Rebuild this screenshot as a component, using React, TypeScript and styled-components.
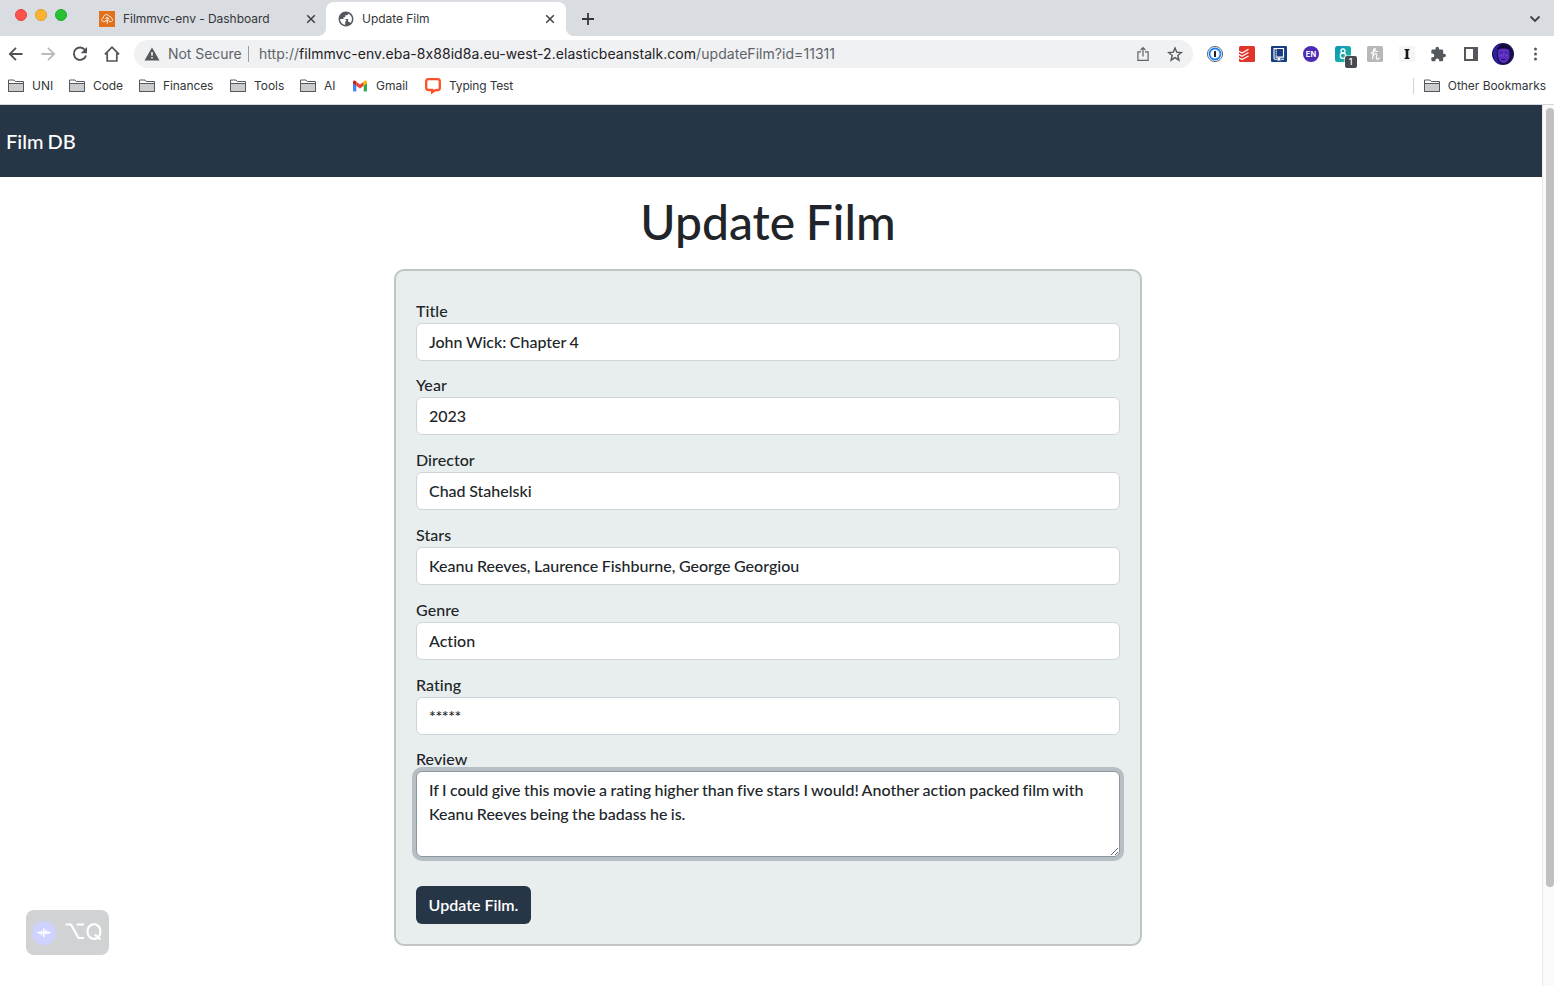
import React from "react";
import styled, { createGlobalStyle } from "styled-components";

const GlobalStyle = createGlobalStyle`
  *, *::before, *::after { box-sizing: border-box; }
  html, body { margin: 0; padding: 0; background: #fff; overflow: hidden; }
  input, textarea, button { font: inherit; color: inherit; }
`;

const Window = styled.div`
  display: flex;
  flex-direction: column;
  width: 1554px;
  height: 986px;
  overflow: hidden;
  font-family: Inter, "Liberation Sans", sans-serif;
  color: #333639;
`;

/* ---------- tab strip ---------- */

const TabStrip = styled.header`
  display: flex;
  height: 36px;
  padding-left: 15px;
  background: #d9dce1;
`;

const TrafficLights = styled.div`
  display: flex;
  gap: 8px;
  width: 72px;
  padding-top: 9px;
`;

const Light = styled.span<{ $fill: string; $edge: string }>`
  width: 12px;
  height: 12px;
  border-radius: 50%;
  background: ${(p) => p.$fill};
  border: 1px solid ${(p) => p.$edge};
`;

const Tab = styled.div<{ $active?: boolean }>`
  position: relative;
  display: flex;
  align-items: center;
  width: ${(p) => (p.$active ? 240 : 239)}px;
  height: 34px;
  margin-top: 2px;
  padding: 0 ${(p) => (p.$active ? 11 : 10)}px 0 12px;
  border-radius: 8px 8px 0 0;
  background: ${(p) => (p.$active ? "#fff" : "transparent")};
  font-size: 12px;

  &::before,
  &::after {
    content: ${(p) => (p.$active ? '""' : "none")};
    position: absolute;
    bottom: 0;
    width: 8px;
    height: 8px;
  }
  &::before {
    left: -8px;
    background: radial-gradient(circle at 0 0, #d9dce1 7.5px, #fff 8.5px);
  }
  &::after {
    right: -8px;
    background: radial-gradient(circle at 100% 0, #d9dce1 7.5px, #fff 8.5px);
  }
`;

const TabTitle = styled.span`
  flex: 1;
  margin-left: 8px;
  padding-bottom: 2px;
  white-space: nowrap;
  letter-spacing: -0.04px;
`;

const NewTab = styled.div`
  display: flex;
  align-items: center;
  margin-left: 15px;
  padding-top: 2px;
`;

const TabSearch = styled.div`
  display: flex;
  align-items: center;
  margin-left: auto;
  padding: 2px 13px 0 0;
`;

/* ---------- toolbar ---------- */

const Toolbar = styled.div`
  display: flex;
  align-items: center;
  height: 36px;
  background: #fff;
`;

const Slot = styled.span`
  display: flex;
  flex: 0 0 32px;
  align-items: center;
  justify-content: center;
  height: 28px;
`;

const AddressBar = styled.div`
  display: flex;
  flex: 0 0 1059px;
  align-items: center;
  height: 28px;
  margin: 0 6px;
  padding: 0 2px 0 10px;
  border-radius: 14px;
  background: #eff1f3;
  font-size: 14px;
  color: #5f6368;
  white-space: nowrap;
`;

const Security = styled.span`
  display: flex;
  align-items: center;
  width: 104px;
  gap: 8px;
`;

const SecurityText = styled.span`
  padding-bottom: 1px;
  letter-spacing: -0.05px;
`;

const Divider = styled.span<{ $light?: boolean }>`
  width: 1px;
  height: 16px;
  background: ${(p) => (p.$light ? "#cfd2d6" : "#9a9ea3")};
`;

const Url = styled.span`
  flex: 1;
  margin-left: 10px;
  padding-bottom: 1px;
  letter-spacing: 0.045px;

  b {
    font-weight: 400;
    color: #1f2124;
  }
`;

const Avatar = styled.span`
  width: 22px;
  height: 22px;
  border-radius: 50%;
  overflow: hidden;
`;

/* ---------- bookmarks ---------- */

const BookmarkBar = styled.nav`
  display: flex;
  align-items: center;
  height: 33px;
  padding: 0 8px 5px;
  border-bottom: 1px solid #d5d7da;
  background: #fff;
  font-size: 12px;
`;

const Bookmark = styled.span<{ $width?: number; $tracking?: number }>`
  display: flex;
  flex: 0 0 ${(p) => (p.$width ? `${p.$width}px` : "auto")};
  align-items: center;
  gap: 8px;
  white-space: nowrap;
  letter-spacing: ${(p) => p.$tracking ?? 0}px;

  svg { flex: none; }
`;

const OtherBookmarks = styled.div`
  display: flex;
  align-items: center;
  gap: 10px;
  width: 133px;
  margin-left: auto;
`;

/* ---------- web page ---------- */

const Viewport = styled.div`
  position: relative;
  display: flex;
  flex: 1;
  min-height: 0;
`;

const Page = styled.div`
  flex: 1;
  font-family: Lato, sans-serif;
  font-size: 16px;
  font-weight: 500;
  line-height: 24px;
  color: #212529;
`;

const SiteHeader = styled.div`
  display: flex;
  align-items: center;
  height: 72px;
  padding: 0 6px 0;
  background: #273646;
  color: #fff;
  font-size: 20px;
  line-height: 30px;
  word-spacing: -1px;
`;

const Main = styled.main`
  display: flex;
  flex-direction: column;
  align-items: center;
  padding: 16px 6px 0 0;
`;

const Heading = styled.h1`
  margin: 0 0 18px;
  font-size: 48px;
  font-weight: 500;
  line-height: 58px;
  word-spacing: -1.6px;
`;

const Form = styled.form`
  display: flex;
  flex-direction: column;
  align-items: flex-start;
  gap: 13px;
  width: 748px;
  height: 677px;
  padding: 28px 20px 20px;
  border: 2px solid #c1c4c4;
  border-radius: 10px;
  background: #e8eeee;
`;

const Field = styled.label<{ $tight?: boolean }>`
  display: flex;
  flex-direction: column;
  width: 100%;
  margin-top: ${(p) => (p.$tight ? -1 : 0)}px;
  font-variant-ligatures: none;
  letter-spacing: 0.06px;
`;

const Input = styled.input<{ $tracking?: number }>`
  width: 100%;
  height: 38px;
  padding: 5px 12px 7px;
  border: 1px solid #ced4da;
  border-radius: 6px;
  outline: none;
  background: #fff;
  font-variant-ligatures: none;
  letter-spacing: ${(p) => p.$tracking ?? 0}px;
  word-spacing: -0.5px;
`;

const TextArea = styled.textarea`
  display: block;
  width: 100%;
  height: 86px;
  padding: 6px 12px;
  border: 1px solid #8a96a3;
  border-radius: 6px;
  outline: none;
  background: #fff;
  box-shadow: 0 0 0 4px #b8bfc4;
  font-variant-ligatures: none;
  letter-spacing: 0;
  word-spacing: -0.65px;
  resize: vertical;
`;

const Submit = styled.button`
  width: 115px;
  height: 38px;
  margin-top: 16px;
  padding: 0;
  border: 0;
  border-radius: 6px;
  background: #273646;
  color: #fff;
  font-weight: 600;
`;

const Scrollbar = styled.div`
  width: 12px;
  padding: 3px 0 0 3px;
  border-left: 1px solid #e8e8e8;
  background: #fafafa;
`;

const Thumb = styled.div`
  width: 8px;
  height: 779px;
  border-radius: 4px;
  background: #c1c1c1;
`;

const Shortcut = styled.div`
  position: absolute;
  left: 26px;
  bottom: 31px;
  display: flex;
  align-items: center;
  gap: 9px;
  width: 83px;
  height: 45px;
  padding-left: 6px;
  border-radius: 8px;
  background: #d0d2d4;
`;

/* ---------- drawings ---------- */

const Close = () => (
  <svg width="10" height="10" viewBox="0 0 10 10" stroke="#3c4043" strokeWidth="1.5">
    <path d="M1.2 1.2 8.8 8.8M8.8 1.2 1.2 8.8" />
  </svg>
);

const AwsIcon = () => (
  <svg width="16" height="16" viewBox="0 0 16 16" fill="none">
    <rect width="16" height="16" fill="#e2711d" />
    <g stroke="#fff" strokeWidth=".85">
      <path d="M6.4 10.6H4.7C1.9 10.4 2 7.4 4.3 7 4.2 3.3 9.2 2.5 10.2 5.4c1.2-.3 1.9.5 1.9 1.6 2.3.5 2 3.4-.3 3.6H10" />
      <path d="M8.2 12.7V6.3M6.3 8.1l1.9-1.9 1.8 1.9M6.1 9.2l2 1.1 2-1.8" />
    </g>
  </svg>
);

const Globe = () => (
  <svg width="16" height="16" viewBox="1.2 1.2 21.6 21.6" fill="#54585d">
    <path d="M12 2C6.480 2 2 6.480 2 12s4.480 10 10 10 10-4.480 10-10S17.520 2 12 2zm-1 17.930c-3.950-.49-7-3.850-7-7.930h5.500c2 0 3 1 3 3.200H11v4.730zm6.900-2.540c-.26-.81-1-1.390-1.900-1.390h-1v-3c0-.55-.45-1-1-1H8.600v-2.200H10c.55 0 1-.45 1-1V7h2c1.100 0 2-.9 2-2v-.41c2.930 1.190 5 4.060 5 7.410 0 2.080-.8 3.970-2.100 5.390z" />
  </svg>
);

const Arrow = ({ forward }: { forward?: boolean }) => (
  <svg width="16" height="16" viewBox="0 0 16 16" fill="none" stroke={forward ? "#b9bbbe" : "#4f5358"} strokeWidth="1.8">
    {forward ? <path d="M1.500 8h12.500M8 1.800 14.200 8 8 14.200" /> : <path d="M14.500 8H2M8 1.800 1.800 8 8 14.200" />}
  </svg>
);

const Reload = () => (
  <svg width="16" height="16" viewBox="0 0 16 16">
    <path d="M13.200 4.200A6.200 6.200 0 1 0 14 9.500" fill="none" stroke="#4f5358" strokeWidth="1.900" />
    <path d="M15 1v6.300H8.700Z" fill="#4f5358" />
  </svg>
);

const Home = () => (
  <svg width="18" height="18" viewBox="0 0 18 18" fill="none" stroke="#4f5358" strokeWidth="1.700">
    <path d="M1.900 9.300 9 2.100l7.100 7.200M4.200 8v8h9.600V8" />
  </svg>
);

const Warning = () => (
  <svg width="16" height="16" viewBox="0 0 16 16">
    <path d="M8 1.500 15.500 14.500H.5Z" fill="#54585d" />
    <path d="M7.200 6h1.600v3.800H7.200ZM7.200 11h1.600v1.600H7.200Z" fill="#eff1f3" />
  </svg>
);

const Share = () => (
  <svg width="14" height="16" viewBox="0 0 14 16" fill="none" stroke="#5f6368" strokeWidth="1.200">
    <path d="M5 5.800H1.900v8.500h10.200V5.800H9M7 10.500V1.800M4.500 4.200 7 1.700l2.500 2.500" />
  </svg>
);

const Star = () => (
  <svg width="16" height="16" viewBox="0 0 16 16" fill="none" stroke="#54585d" strokeWidth="1.400">
    <path d="m8 2 1.700 4.100 4.700.4-3.600 3 1.100 4.600L8 11.600l-3.900 2.500 1.100-4.600-3.600-3 4.700-.4Z" />
  </svg>
);

const OnePassword = () => (
  <svg width="16" height="16" viewBox="0 0 16 16">
    <circle cx="8" cy="8" r="7.600" fill="#fff" stroke="#55585c" strokeWidth=".9" />
    <circle cx="8" cy="8" r="5.500" fill="#fff" stroke="#1a82f5" strokeWidth="1.800" />
    <rect x="7" y="5" width="2" height="6" rx=".5" fill="#222" />
  </svg>
);

const Todoist = () => (
  <svg width="16" height="16" viewBox="0 0 16 16" fill="none">
    <rect width="16" height="16" rx="1.500" fill="#e0352b" />
    <path d="m0 5.300 3 1.700 6.500-3.700M0 8.600l3 1.700 6.500-3.700M0 11.900l3 1.700 6.500-3.700" stroke="#fff" strokeWidth="1.200" />
  </svg>
);

const Book = () => (
  <svg width="16" height="16" viewBox="0 0 16 16" fill="none">
    <rect width="16" height="16" rx="1" fill="#173f80" />
    <path d="M6.500 13.200H3.800Q3 13.200 3 12V2.500h9.500v8.600H4.500M10 13.200h3" stroke="#fff" strokeWidth="1.100" />
    <path d="M5.200 2.500v8.500" stroke="#fff" strokeWidth="1" strokeDasharray="1.500 .6" />
    <path d="M6.600 12h2.800v3.300L8 14.200l-1.400 1.100Z" fill="#fff" />
  </svg>
);

const Language = () => (
  <svg width="16" height="16" viewBox="0 0 16 16">
    <circle cx="8" cy="8" r="8" fill="#4c2bb3" />
    <text x="8" y="10.700" textAnchor="middle" fontFamily="Inter, sans-serif" fontSize="7.500" fontWeight="700" fill="#fff">EN</text>
  </svg>
);

const Counter = () => (
  <svg width="28" height="28" viewBox="0 0 28 28" fill="none">
    <defs>
      <linearGradient id="teal" x1="0" y1="0" x2="1" y2="1">
        <stop stopColor="#0b93bd" />
        <stop offset="1" stopColor="#20bd9d" />
      </linearGradient>
    </defs>
    <rect x="6" y="6" width="16" height="16" rx="2.500" fill="url(#teal)" />
    <circle cx="14" cy="11" r="2" stroke="#fff" strokeWidth="1.300" />
    <circle cx="14" cy="15.700" r="2.700" stroke="#fff" strokeWidth="1.300" />
    <rect x="15.500" y="15.500" width="12.500" height="12.500" rx="2" fill="#fff" />
    <rect x="16" y="16" width="12" height="12" rx="2" fill="#46494d" />
    <text x="21.700" y="25.300" textAnchor="middle" fontFamily="Inter, sans-serif" fontSize="9" fontWeight="500" fill="#fff">1</text>
  </svg>
);

const Honey = () => (
  <svg width="16" height="16" viewBox="0 0 16 16" fill="none">
    <rect width="16" height="16" rx="1.500" fill="#b8b8b8" />
    <path d="M3.800 7.300C6.500 6.500 8.800 4.500 8.300 3 7.800 1.900 6.600 2.700 6.400 4.500L5.600 13.200M5.800 10.500C7 7.500 9.800 6.800 9.600 9c-.1 1.800-1 4.200.6 4.200 1 0 1.800-.7 2.300-1.600M8.300 5.500h2.700" stroke="#fff" strokeWidth="1.200" />
  </svg>
);

const Instapaper = () => (
  <svg width="16" height="16" viewBox="0 0 16 16">
    <rect width="16" height="16" fill="#f6f6f6" />
    <path d="M5.500 3h5v1L9.300 4.400v7.200l1.200.4v1h-5v-1l1.200-.4V4.400L5.500 4Z" fill="#161616" />
  </svg>
);

const Puzzle = () => (
  <svg width="16" height="16" viewBox="1.500 0 23 23" fill="#54585d">
    <path d="M20.500 11H19V7c0-1.100-.9-2-2-2h-4V3.500a2.500 2.500 0 0 0-5 0V5H4c-1.100 0-2 .9-2 2v3.800h1.500a2.700 2.700 0 0 1 0 5.400H2V20c0 1.100.9 2 2 2h3.800v-1.500a2.700 2.700 0 0 1 5.400 0V22H17c1.100 0 2-.9 2-2v-4h1.500a2.500 2.500 0 0 0 0-5Z" />
  </svg>
);

const SidePanel = () => (
  <svg width="14" height="14" viewBox="0 0 14 14">
    <rect width="14" height="14" fill="#54585d" />
    <rect x="2" y="2" width="7" height="10" fill="#fff" />
  </svg>
);

const Face = () => (
  <svg width="22" height="22" viewBox="0 0 22 22">
    <rect width="22" height="22" fill="#1a0f52" />
    <path d="M1 11C1 5 4 2 8 1L5 8v8l3 6-5-3Z" fill="#2a20a0" />
    <path d="M6 8c1-4 9-5 11-1l.5 6c-.5 4-3 7-6 7s-5-3-5.500-7Z" fill="#5a2fbd" />
    <path d="M5 6.500c1-5.500 12-6.500 13 .5-3-1.500-8-2-13-.5Z" fill="#120838" />
    <path d="M7.800 9.500h2.700M13 9.500h2.700M9 16c1.500.9 3.500.9 5 0" stroke="#33177e" strokeWidth=".8" />
    <path d="M11.700 10.500v3M8 12.500h1.800M13.800 12.500h1.800" stroke="#7445cf" strokeWidth="1" />
  </svg>
);

const Dots = () => (
  <svg width="4" height="14" viewBox="0 0 4 14" fill="#54585d">
    <circle cx="2.500" cy="2" r="1.500" />
    <circle cx="2.500" cy="7" r="1.500" />
    <circle cx="2.500" cy="12" r="1.500" />
  </svg>
);

const Folder = () => (
  <svg width="16" height="14" viewBox="0 0 16 14" fill="none" stroke="#54585d">
    <path d="M.5 12.500v-11.500h5.500l1.300 1.500h8.200v10Z" fill="#fff" />
    <path d="M.5 4.500h15v8H.5Z" fill="#cbcccd" />
  </svg>
);

const GmailIcon = () => (
  <svg width="16" height="16" viewBox="0 0 16 16">
    <path d="M1 4.500 4.300 7v6.500H2A1 1 0 0 1 1 12.500Z" fill="#4285f4" />
    <path d="M15 4.500 11.700 7v6.500H14a1 1 0 0 0 1-1Z" fill="#34a853" />
    <path d="M4.300 3.800 8 6.600l3.700-2.800v4L8 10.600 4.300 7.800Z" fill="#ea4335" />
    <path d="M1 4.200c0-1.600 1.500-2.100 2.500-1.300l.8.600v4.300L1 5.300Z" fill="#c5221f" />
    <path d="M15 4.200c0-1.600-1.500-2.100-2.500-1.300l-.8.600v4.300L15 5.300Z" fill="#fbbc04" />
  </svg>
);

const TypingIcon = () => (
  <svg width="16" height="16" viewBox="0 0 16 16">
    <path d="M3.500 1.200h9q2.300 0 2.300 2.300v6.400q0 1.900-1.900 2.100l-3.100.3-2.600 1.900V12H3.500q-2.300 0-2.300-2.300V3.500q0-2.300 2.300-2.300Z" fill="none" stroke="#ff5128" strokeWidth="2.300" />
    <path d="M6.200 12v4l4.500-3.500Z" fill="#ff5128" />
  </svg>
);

const OptionKey = () => (
  <svg width="40" height="22" viewBox="0 0 40 22" fill="none" stroke="#fff" strokeWidth="2.200">
    <path d="M.5 2.500h5.500l7.500 13.500h5.500M11.500 2.500H19" />
    <ellipse cx="29" cy="9.500" rx="6.500" ry="7.300" />
    <path d="m29.800 12.700 5.700 4.800" />
  </svg>
);

const VoiceIcon = () => (
  <svg width="24" height="24" viewBox="0 0 24 24">
    <circle cx="12" cy="12" r="12" fill="#cfd1ff" />
    <path d="M4.500 11.600h15" stroke="#fff" strokeWidth="1" />
    <path d="M7.500 10.500v2.500M9.500 9.800v4.500M11.800 7.500v8.500M14 9v4.500M16.200 10.300v2.700" stroke="#fff" strokeWidth="1.500" />
  </svg>
);

/* ---------- data ---------- */

const bookmarks = [
  { name: "UNI", width: 61 },
  { name: "Code", width: 70, tracking: -0.1 },
  { name: "Finances", width: 91, tracking: -0.1 },
  { name: "Tools", width: 70, tracking: -0.05 },
  { name: "AI", width: 52 },
  { name: "Gmail", width: 73, icon: <GmailIcon /> },
  { name: "Typing Test", width: 100, tracking: -0.17, icon: <TypingIcon /> },
];

const extensions = [
  OnePassword, Todoist, Book, Language, Counter, Honey, Instapaper, Puzzle, SidePanel,
];

const fields = [
  { label: "Title", value: "John Wick: Chapter 4" },
  { label: "Year", value: "2023", tight: true },
  { label: "Director", value: "Chad Stahelski" },
  { label: "Stars", value: "Keanu Reeves, Laurence Fishburne, George Georgiou" },
  { label: "Genre", value: "Action" },
  { label: "Rating", value: "*****", tracking: -0.4 },
];

export default function App() {
  return (
    <>
      <GlobalStyle />
      <Window>
        <TabStrip>
          <TrafficLights>
            <Light $fill="#ff544d" $edge="#e3443d" />
            <Light $fill="#fdb32f" $edge="#e09c25" />
            <Light $fill="#28c131" $edge="#1ea927" />
          </TrafficLights>
          <Tab>
            <AwsIcon />
            <TabTitle>Filmmvc-env - Dashboard</TabTitle>
            <Close />
          </Tab>
          <Tab $active>
            <Globe />
            <TabTitle>Update Film</TabTitle>
            <Close />
          </Tab>
          <NewTab>
            <svg width="14" height="14" viewBox="0 0 14 14" stroke="#33373b" strokeWidth="1.800">
              <path d="M7 1v12M1 7h12" />
            </svg>
          </NewTab>
          <TabSearch>
            <svg width="12" height="8" viewBox="0 0 12 8" fill="none" stroke="#3c4043" strokeWidth="1.800">
              <path d="m1.500 1.500 4.500 4.500 4.500-4.500" />
            </svg>
          </TabSearch>
        </TabStrip>

        <Toolbar>
          <Slot><Arrow /></Slot>
          <Slot><Arrow forward /></Slot>
          <Slot><Reload /></Slot>
          <Slot><Home /></Slot>
          <AddressBar>
            <Security>
              <Warning />
              <SecurityText>Not Secure</SecurityText>
            </Security>
            <Divider />
            <Url>http://<b>filmmvc-env.eba-8x88id8a.eu-west-2.elasticbeanstalk.com</b>/updateFilm?id=11311</Url>
            <Slot><Share /></Slot>
            <Slot><Star /></Slot>
          </AddressBar>
          {extensions.map((Icon, i) => (
            <Slot key={i}><Icon /></Slot>
          ))}
          <Slot><Avatar><Face /></Avatar></Slot>
          <Slot><Dots /></Slot>
        </Toolbar>

        <BookmarkBar>
          {bookmarks.map((b) => (
            <Bookmark key={b.name} $width={b.width} $tracking={b.tracking}>
              {b.icon ?? <Folder />}
              {b.name}
            </Bookmark>
          ))}
          <OtherBookmarks>
            <Divider $light />
            <Bookmark $tracking={-0.04}><Folder />Other Bookmarks</Bookmark>
          </OtherBookmarks>
        </BookmarkBar>

        <Viewport>
          <Page>
            <SiteHeader>Film DB</SiteHeader>
            <Main>
              <Heading>Update Film</Heading>
              <Form>
                {fields.map((f) => (
                  <Field key={f.label} $tight={f.tight}>
                    {f.label}
                    <Input defaultValue={f.value} $tracking={f.tracking} />
                  </Field>
                ))}
                <Field $tight>
                  Review
                  <TextArea
                    spellCheck={false}
                    defaultValue="If I could give this movie a rating higher than five stars I would! Another action packed film with Keanu Reeves being the badass he is."
                  />
                </Field>
                <Submit type="button">Update Film.</Submit>
              </Form>
            </Main>
          </Page>
          <Scrollbar><Thumb /></Scrollbar>
          <Shortcut><VoiceIcon /><OptionKey /></Shortcut>
        </Viewport>
      </Window>
    </>
  );
}
